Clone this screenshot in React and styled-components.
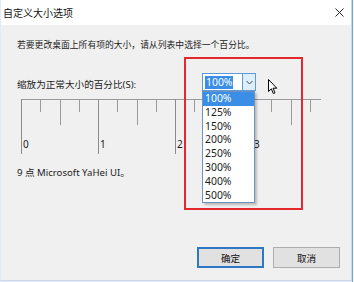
import React from 'react';
import styled, { createGlobalStyle } from 'styled-components';

const Global = createGlobalStyle`
  html, body { margin: 0; padding: 0; }
  body {
    background: #e4ebf3;
    font-family: "Noto Sans", "Noto Sans CJK SC", sans-serif;
    color: #1b1b1b;
  }
`;

const Screen = styled.div`
  position: relative;
  width: 354px;
  height: 282px;
  display: flex;
  overflow: hidden;
`;

const Dialog = styled.div`
  width: 352px;
  height: 281px;
  box-sizing: border-box;
  background: #f0f0f0;
  display: flex;
  flex-direction: column;
  border-left: 1px solid #e2eaf4;
  border-right: 1px solid #c9d9ec;
  border-bottom: 1px solid #c9d9ec;
`;

const Behind = styled.div`
  flex: 1;
  background: #eef3f8;
  border-left: 1px solid #7fa3d3;
`;

const TitleBar = styled.div`
  height: 25px;
  flex: none;
  background: #ffffff;
  display: flex;
  align-items: center;
  justify-content: space-between;
  padding: 0 7px 0 2px;
`;

const Title = styled.span`
  font-size: 10px;
  line-height: 14px;
  color: #111;
  white-space: nowrap;
`;

const CloseIcon = styled.svg`
  width: 9px;
  height: 9px;
  display: block;
`;

const Content = styled.div`
  flex: 1;
  display: flex;
  flex-direction: column;
  padding: 0 11px 12px 16px;
`;

const Text = styled.div`
  font-size: ${p => p.$size || 9.6}px;
  line-height: 14px;
  white-space: nowrap;
  margin-top: ${p => p.$mt || 0}px;
`;

const Row = styled.div`
  display: flex;
  align-items: flex-start;
  margin-top: 21px;
`;

const Label = styled(Text)`
  width: 185px;
  margin-top: 5px;
`;

const Combo = styled.div`
  width: 54px;
  height: 18px;
  box-sizing: border-box;
  border: 1px solid #5a9ad8;
  background: #fff;
  display: flex;
`;

const ComboField = styled.div`
  flex: 1;
  display: flex;
  align-items: center;
  padding-left: 2px;
`;

const Selected = styled.span`
  display: block;
  background: #3a8ee6;
  color: #fff;
  font-size: 10.4px;
  line-height: 13px;
  height: 13px;
  padding: 0 1px;
`;

const ComboButton = styled.div`
  width: 12px;
  background: #dfeefc;
  border-left: 1px solid #5a9ad8;
  display: flex;
  align-items: center;
  justify-content: center;
`;

const Ruler = styled.svg`
  display: block;
  margin: 7px 0 0 4px;
  width: 300px;
  height: 55px;
  overflow: visible;
`;

const Buttons = styled.div`
  margin-top: auto;
  display: flex;
  justify-content: flex-end;
  gap: 9px;
`;

const Button = styled.div`
  width: 67px;
  height: 21px;
  box-sizing: border-box;
  background: #e1e1e1;
  border: ${p => (p.$primary ? '2px solid #2f78c4' : '1px solid #adadad')};
  display: flex;
  align-items: center;
  justify-content: center;
  font-size: 9.6px;
  color: #111;
`;

const RedFrame = styled.div`
  position: absolute;
  left: 184px;
  top: 57px;
  width: 119px;
  height: 153px;
  box-sizing: border-box;
  border: 2px solid #e4282c;
  pointer-events: none;
`;

const DropList = styled.ul`
  position: absolute;
  left: 202px;
  top: 91px;
  width: 53px;
  margin: 0;
  padding: 0;
  list-style: none;
  box-sizing: border-box;
  background: #fff;
  border: 1px solid #6e93c2;
  box-shadow: 2px 2px 2px rgba(0, 0, 0, 0.22);
`;

const Item = styled.li`
  height: 13.8px;
  line-height: 13.8px;
  font-size: 10.4px;
  padding-left: 2px;
  background: ${p => (p.$active ? '#3a8ee6' : 'transparent')};
  color: ${p => (p.$active ? '#fff' : '#1b1b1b')};
`;

const Cursor = styled.svg`
  position: absolute;
  left: 268px;
  top: 79px;
  width: 11px;
  height: 16px;
`;

const options = ['100%', '125%', '150%', '200%', '250%', '300%', '400%', '500%'];

function RulerDrawing() {
  const unit = 77;
  const ticks = [];
  for (let i = 0; i < 4; i++) {
    const base = i * unit;
    ticks.push(<line key={`M${i}`} x1={base + 0.5} y1={0} x2={base + 0.5} y2={55} stroke="#8c8c8c" />);
    [1, 2, 3].forEach(k => {
      const x = Math.round(base + (unit / 4) * k) + 0.5;
      const len = k === 2 ? 26 : 13;
      ticks.push(<line key={`m${i}${k}`} x1={x} y1={0} x2={x} y2={len} stroke="#9a9a9a" />);
    });
  }
  return (
    <Ruler viewBox="0 0 300 55">
      <line x1={0} y1={0.5} x2={300} y2={0.5} stroke="#9a9a9a" />
      {ticks}
      {[0, 1, 2, 3].map(n => (
        <text key={n} x={n * unit + 2} y={49} fontSize="10" fill="#1b1b1b" fontFamily="Noto Sans, sans-serif">
          {n}
        </text>
      ))}
    </Ruler>
  );
}

export default function App() {
  return (
    <Screen>
      <Global />
      <Dialog>
        <TitleBar>
          <Title>自定义大小选项</Title>
          <CloseIcon viewBox="0 0 9 9">
            <path d="M0.5 0.5 L8.5 8.5 M8.5 0.5 L0.5 8.5" stroke="#2a2a2a" strokeWidth="1" fill="none" />
          </CloseIcon>
        </TitleBar>
        <Content>
          <Text $mt={13} $size={8.8}>若要更改桌面上所有项的大小，请从列表中选择一个百分比。</Text>
          <Row>
            <Label>缩放为正常大小的百分比(S):</Label>
            <Combo>
              <ComboField>
                <Selected>100%</Selected>
              </ComboField>
              <ComboButton>
                <svg width="7" height="5" viewBox="0 0 7 5">
                  <polyline points="0.5,1 3.5,4 6.5,1" fill="none" stroke="#444" strokeWidth="1" />
                </svg>
              </ComboButton>
            </Combo>
          </Row>
          <RulerDrawing />
          <Text $mt={12}>9 点 Microsoft YaHei UI。</Text>
          <Buttons>
            <Button $primary>确定</Button>
            <Button>取消</Button>
          </Buttons>
        </Content>
      </Dialog>
      <Behind />
      <RedFrame />
      <DropList>
        {options.map((o, i) => (
          <Item key={o} $active={i === 0}>{o}</Item>
        ))}
      </DropList>
      <Cursor viewBox="0 0 11 16">
        <path d="M0.5 0.5 L0.5 12.5 L3.3 9.8 L5.3 14.5 L7 13.8 L5 9.2 L8.8 9.2 Z" fill="#fff" stroke="#000" strokeWidth="1" strokeLinejoin="miter" />
      </Cursor>
    </Screen>
  );
}
